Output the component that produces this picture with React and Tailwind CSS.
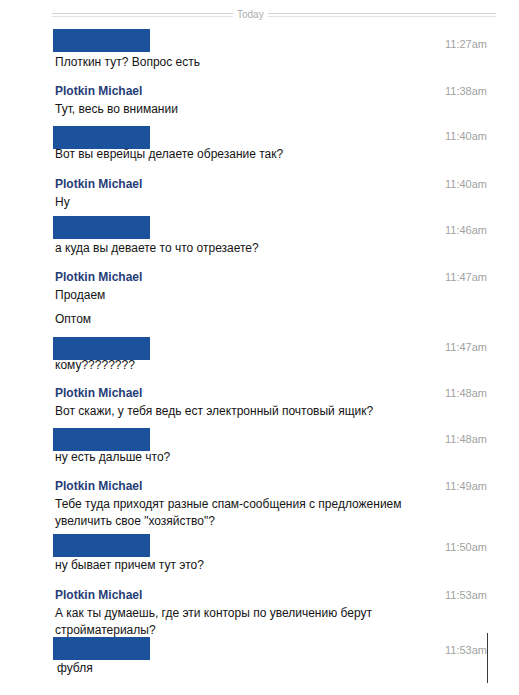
const messages = [
  { mine: false, time: '11:27am', gap: '', box: 'mt-[-6px] mb-[2px]', chunks: [['Плоткин тут? Вопрос есть']] },
  { mine: true, time: '11:38am', gap: 'mt-[11px]', chunks: [['Тут, весь во внимании']] },
  { mine: false, time: '11:40am', gap: 'mt-[9px]', box: 'mt-[-1px] mb-[-2px]', chunks: [['Вот вы еврейцы делаете обрезание так?']] },
  { mine: true, time: '11:40am', gap: 'mt-[12px]', chunks: [['Ну']] },
  { mine: false, time: '11:46am', gap: 'mt-[10px]', box: 'mt-[-5px] mb-[1px]', chunks: [['а куда вы деваете то что отрезаете?']] },
  { mine: true, time: '11:47am', gap: 'mt-[11px]', chunks: [['Продаем'], ['Оптом']] },
  { mine: false, time: '11:47am', gap: 'mt-[10px]', box: 'mt-[-1px] mb-[-2px]', chunks: [['кому????????']] },
  { mine: true, time: '11:48am', gap: 'mt-[10px]', chunks: [['Вот скажи, у тебя ведь ест электронный почтовый ящик?']] },
  { mine: false, time: '11:48am', gap: 'mt-[10px]', box: 'mt-[-2px] mb-[-1px]', chunks: [['ну есть дальше что?']] },
  { mine: true, time: '11:49am', gap: 'mt-[11px]', chunks: [['Тебе туда приходят разные спам-сообщения с предложением', 'увеличить свое "хозяйство"?']] },
  { mine: false, time: '11:50am', gap: 'mt-[8px]', box: 'mt-[-4px] mb-[0px]', chunks: [['ну бывает причем тут это?']] },
  { mine: true, time: '11:53am', gap: 'mt-[12px]', chunks: [['А как ты думаешь, где эти конторы по увеличению берут', 'стройматериалы?']] },
  { mine: false, time: '11:53am', gap: 'mt-[2px]', box: 'mt-[-4px] mb-[0px]', last: true, chunks: [['фубля']] },
];

function Message({ m }) {
  return (
    <div className={`relative ${m.gap}`}>
      <div className="flex items-center justify-between h-[19px]">
        {m.mine ? (
          <span className="text-[12px] leading-[19px] font-bold text-[#263d77]">Plotkin Michael</span>
        ) : (
          <div className={`w-[97px] h-[23px] -ml-[2px] bg-[#1c519c] ${m.box}`} />
        )}
        <span className="text-[11px] leading-[19px] text-[#a2a2a2]">{m.time}</span>
      </div>
      {m.chunks.map((lines, i) => (
        <div key={i} className={`${i > 0 ? 'mt-[7px]' : ''} ${m.last ? 'pl-[2px]' : ''}`}>
          {lines.map((l, j) => (
            <div key={j} className="text-[12px] leading-[17px] text-[#141414]">{l}</div>
          ))}
        </div>
      ))}
      {/* text cursor */}
      {m.last && <div className="absolute right-[-1px] top-[-8px] w-px h-[50px] bg-[#3a3a3a]" />}
    </div>
  );
}

export default function App() {
  return (
    <div className="w-[519px] h-[695px] bg-white overflow-hidden pl-[55px] pr-[32px] pt-[10px]" style={{ fontFamily: '"Liberation Sans", Arial, sans-serif' }}>
      <div className="flex items-center -ml-[3px] -mr-[9px] h-[10px]">
        <div className="w-[181px] h-[4px] border-t border-b border-t-[#d2d2d2] border-b-[#e4e4e4]" />
        <span className="px-[4px] text-[10px] leading-[10px] text-[#ababab]">Today</span>
        <div className="flex-1 h-[4px] border-t border-b border-t-[#d2d2d2] border-b-[#e4e4e4]" />
      </div>
      <div className="mt-[15px]">
        {messages.map((m, i) => (
          <Message key={i} m={m} />
        ))}
      </div>
    </div>
  );
}
